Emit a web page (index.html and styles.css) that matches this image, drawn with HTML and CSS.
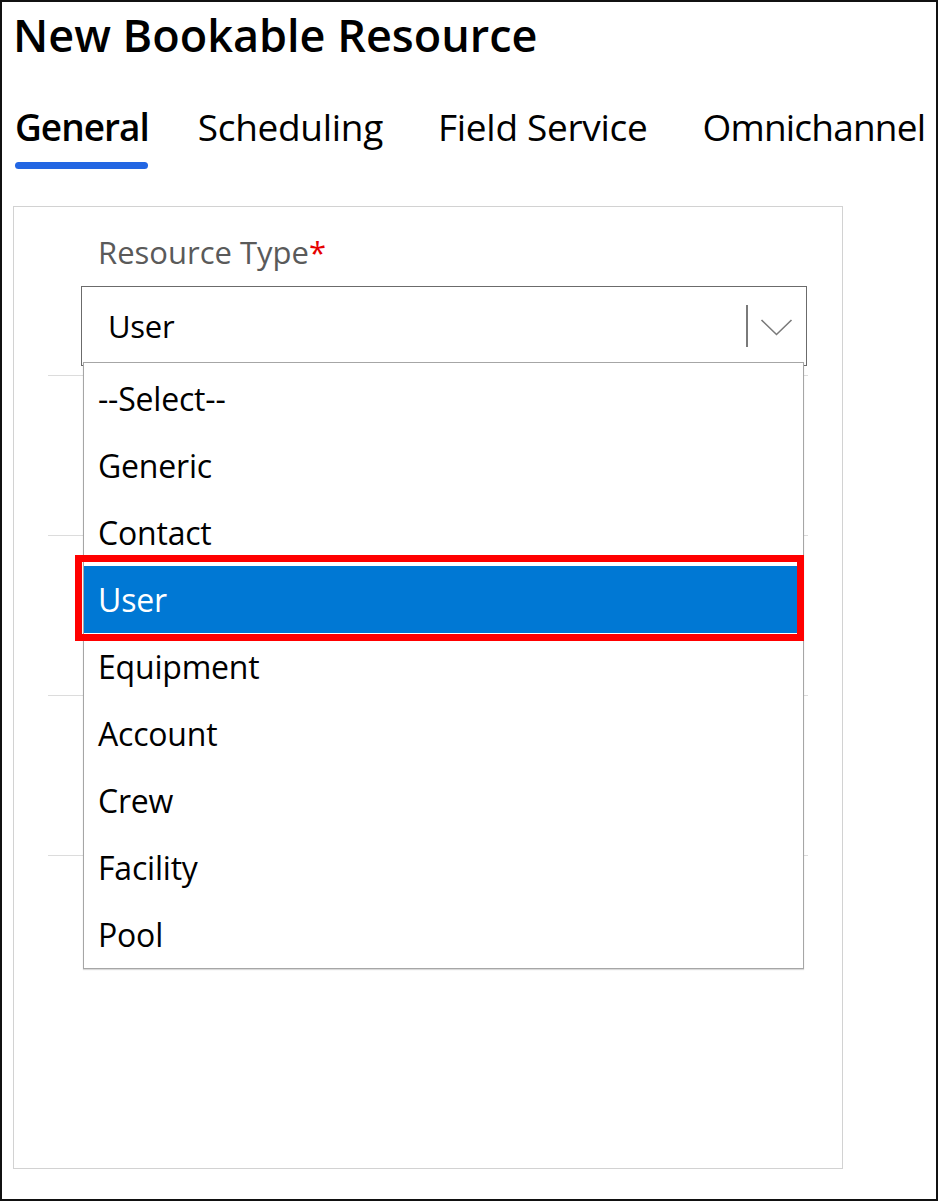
FILE: index.html
```html
<!DOCTYPE html>
<html lang="en">
<head>
<meta charset="utf-8">
<title>New Bookable Resource</title>
<link rel="stylesheet" href="styles.css">
</head>
<body>
<div class="frame">
  <h1 class="title">New Bookable Resource</h1>
  <nav class="tabs">
    <div class="tab tab-active">General</div>
    <div class="tab">Scheduling</div>
    <div class="tab">Field Service</div>
    <div class="tab">Omnichannel</div>
  </nav>
  <section class="card">
    <div class="field field-first">
      <div class="label">Resource Type<span class="req">*</span></div>
      <div class="select">
        <span class="select-value">User</span>
        <span class="select-divider"></span>
        <svg class="chevron" width="34" height="20" viewBox="0 0 34 20" aria-hidden="true">
          <polyline points="1.5,3 16.5,17.5 31.5,3" fill="none" stroke="#7a7a7a" stroke-width="1.6"/>
        </svg>
        <ul class="dropdown">
          <li class="option">--Select--</li>
          <li class="option">Generic</li>
          <li class="option">Contact</li>
          <li class="option option-selected">User</li>
          <li class="option">Equipment</li>
          <li class="option">Account</li>
          <li class="option">Crew</li>
          <li class="option">Facility</li>
          <li class="option">Pool</li>
        </ul>
      </div>
    </div>
    <div class="field"></div>
    <div class="field"></div>
    <div class="field"></div>
  </section>
</div>
</body>
</html>
```

FILE: styles.css
```css
html, body {
  margin: 0;
  padding: 0;
  background: #fff;
}

body {
  font-family: "Open Sans", "Noto Sans", sans-serif;
  color: #000;
}

.frame {
  box-sizing: border-box;
  width: 938px;
  height: 1201px;
  border: 2px solid #111;
  padding: 6px 0 0 11px;
  display: flex;
  flex-direction: column;
  overflow: hidden;
}

.title {
  margin: 0;
  font-size: 45px;
  font-weight: 600;
  line-height: 54px;
  white-space: nowrap;
}

.tabs {
  display: flex;
  margin-top: 40px;
  margin-left: 2px;
}

.tab {
  flex: 0 0 auto;
  white-space: nowrap;
  font-size: 37px;
  line-height: 50px;
  margin-right: 55px;
  letter-spacing: -0.3px;
}

.tab:nth-child(3) { margin-right: 55px; }
.tab:last-child {
  margin-right: 0;
  letter-spacing: -0.8px;
}

.tab-active {
  font-weight: 600;
  letter-spacing: -1px;
  display: flex;
  flex-direction: column;
  align-items: flex-start;
  margin-right: 49px;
}

.tab-active::after {
  content: "";
  display: block;
  width: 133px;
  height: 7px;
  border-radius: 4px;
  background: #2266e3;
  margin-top: 10px;
}

.card {
  box-sizing: border-box;
  width: 830px;
  height: 963px;
  margin-top: 37px;
  border: 1.5px solid #d2d2d2;
  padding: 25px 0 0 34px;
  flex: 0 0 auto;
}

.field {
  width: 760px;
  height: 160px;
  box-sizing: border-box;
  border-bottom: 1px solid #dcdcdc;
}

.field-first {
  height: 144px;
  padding-left: 33px;
}

.label {
  font-size: 31px;
  line-height: 40px;
  color: #5a5a5a;
  margin-left: 17px;
}

.req {
  color: #e60000;
}

.select {
  position: relative;
  box-sizing: border-box;
  width: 726px;
  height: 80px;
  margin-top: 14px;
  border: 1.5px solid #6b6b6b;
  display: flex;
  align-items: center;
  padding-left: 26px;
}

.select-value {
  flex: 1;
  font-size: 31px;
  letter-spacing: -0.3px;
}

.select-divider {
  width: 2px;
  height: 42px;
  background: #7a7a7a;
  margin-right: 12px;
}

.chevron {
  margin-right: 12px;
  margin-top: 2px;
}

.dropdown {
  position: absolute;
  top: 75px;
  left: 1px;
  width: 721px;
  box-sizing: border-box;
  margin: 0;
  padding: 2px 0 0;
  list-style: none;
  background: #fff;
  border: 1px solid #a6a6a6;
  box-shadow: 0 1px 1px rgba(0, 0, 0, 0.15);
  z-index: 2;
}

.option {
  height: 67px;
  line-height: 67px;
  font-size: 32px;
  padding-left: 14px;
  letter-spacing: -0.2px;
}

.option-selected {
  position: relative;
  background: #0078d4;
  color: #fff;
}

.option-selected::after {
  content: "";
  position: absolute;
  top: -11px;
  left: -9px;
  width: 729px;
  height: 86px;
  box-sizing: border-box;
  border: 7px solid #ff0000;
}
```
